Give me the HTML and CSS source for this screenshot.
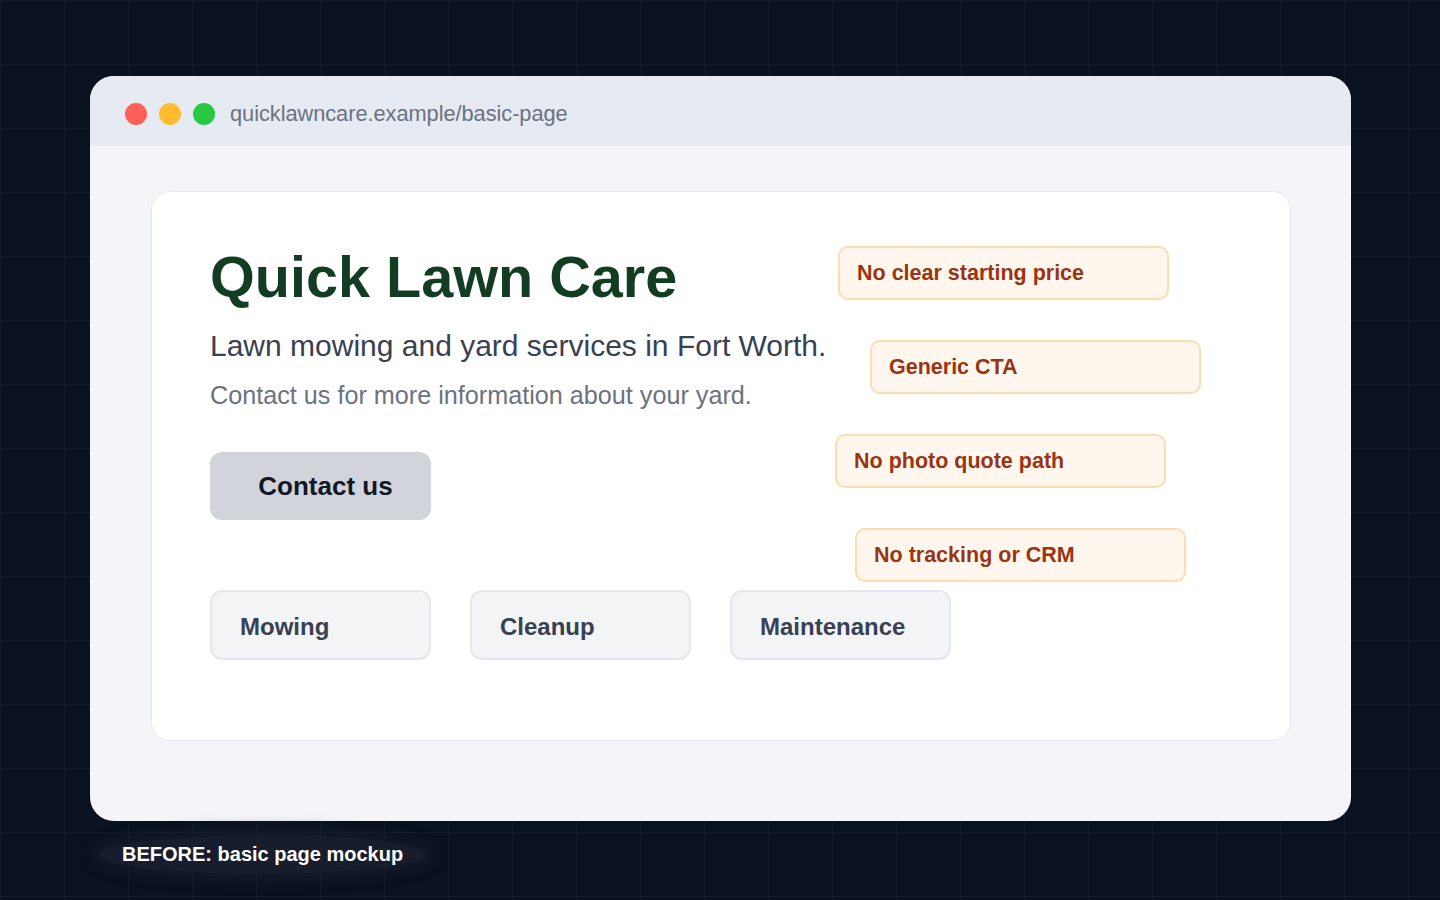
FILE: index.html
```html
<!DOCTYPE html>
<html lang="en">
<head>
<meta charset="utf-8">
<title>Quick Lawn Care - before</title>
<link rel="stylesheet" href="styles.css">
</head>
<body>
<main class="stage">
  <section class="window">
    <header class="titlebar">
      <span class="dot dot-red"></span>
      <span class="dot dot-yellow"></span>
      <span class="dot dot-green"></span>
      <span class="url">quicklawncare.example/basic-page</span>
    </header>
    <div class="viewport">
      <article class="card">
        <h1 class="title">Quick Lawn Care</h1>
        <p class="subtitle">Lawn mowing and yard services in Fort Worth.</p>
        <p class="lead">Contact us for more information about your yard.</p>
        <button class="cta" type="button">Contact us</button>
        <div class="services">
          <div class="chip">Mowing</div>
          <div class="chip">Cleanup</div>
          <div class="chip">Maintenance</div>
        </div>
        <div class="note note-1">No clear starting price</div>
        <div class="note note-2">Generic CTA</div>
        <div class="note note-3">No photo quote path</div>
        <div class="note note-4">No tracking or CRM</div>
      </article>
    </div>
  </section>
  <p class="caption"><span class="caption-text">BEFORE: basic page mockup</span></p>
</main>
</body>
</html>
```

FILE: styles.css
```css
* { box-sizing: border-box; }

html, body {
  margin: 0;
  padding: 0;
}

body {
  width: 1440px;
  height: 900px;
  overflow: hidden;
  font-family: "Liberation Sans", Arial, sans-serif;
  background-color: #0a1120;
  background-image:
    linear-gradient(to right, rgba(255,255,255,0.045) 1px, transparent 1px),
    linear-gradient(to bottom, rgba(255,255,255,0.045) 1px, transparent 1px);
  background-size: 64px 64px;
  background-position: 0 0;
}

.stage {
  padding: 76px 90px 0;
}

.window {
  width: 1261px;
  height: 745px;
  border-radius: 24px;
  background: #f3f5f9;
  overflow: hidden;
  display: flex;
  flex-direction: column;
}

.titlebar {
  height: 70px;
  flex: none;
  background: #e6eaf3;
  display: flex;
  align-items: center;
  padding: 6px 0 0 35px;
  gap: 12px;
}

.dot {
  width: 22px;
  height: 22px;
  border-radius: 50%;
  flex: none;
}
.dot-red { background: #ff5f57; }
.dot-yellow { background: #febc2e; }
.dot-green { background: #28c840; }

.url {
  margin-left: 3px;
  font-size: 21.8px;
  color: #6b7280;
  letter-spacing: -0.05px;
}

.viewport {
  flex: 1;
  padding: 45px 60px 0 61px;
}

.card {
  position: relative;
  height: 550px;
  background: #ffffff;
  border: 1.5px solid #e3e6ec;
  border-radius: 18px;
  padding: 50px 58px 0;
}

.title {
  margin: 0;
  font-size: 57.6px;
  line-height: 70px;
  font-weight: 700;
  color: #133d22;
}

.subtitle {
  margin: 15px 0 0;
  font-size: 30px;
  line-height: 38px;
  color: #374151;
}

.lead {
  margin: 15px 0 0;
  font-size: 25.2px;
  line-height: 30px;
  color: #6b7280;
}

.cta {
  display: block;
  margin-top: 42px;
  width: 221px;
  height: 68px;
  border: none;
  border-radius: 12px;
  background: #d1d5db;
  color: #111827;
  font-family: inherit;
  font-size: 26px;
  font-weight: 700;
  padding: 0 0 0 10px;
}

.services {
  display: flex;
  gap: 39px;
  margin-top: 70px;
}

.chip {
  width: 221px;
  height: 70px;
  background: #f3f4f6;
  border: 2px solid #e5e7eb;
  border-radius: 12px;
  display: flex;
  align-items: center;
  padding: 3px 0 0 28px;
  font-size: 24px;
  font-weight: 700;
  color: #374151;
}

.note {
  position: absolute;
  width: 331px;
  height: 54px;
  background: #fff7ed;
  border: 2px solid #fcdcb0;
  border-radius: 10px;
  display: flex;
  align-items: center;
  padding-left: 17px;
  font-size: 21.5px;
  font-weight: 700;
  color: #9a3412;
}
.note-1 { left: 686px; top: 54px; }
.note-2 { left: 718px; top: 148px; }
.note-3 { left: 683px; top: 242px; }
.note-4 { left: 703px; top: 336px; }

.caption {
  margin: 14px 0 0;
}

.caption-text {
  display: inline-block;
  margin-left: 8px;
  padding: 8px 24px;
  border-radius: 50%;
  background: rgba(28, 33, 48, 0.75);
  box-shadow: 0 0 14px 6px rgba(28, 33, 48, 0.6);
  font-size: 20px;
  font-weight: 700;
  color: #ffffff;
}
```
